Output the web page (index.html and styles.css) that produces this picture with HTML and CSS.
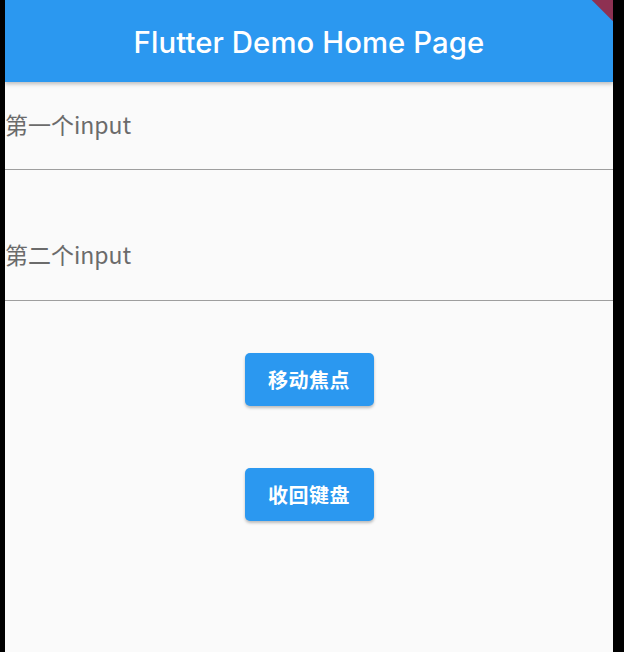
FILE: index.html
```html
<!DOCTYPE html>
<html lang="zh">
<head>
<meta charset="utf-8">
<title>Flutter Demo Home Page</title>
<link rel="stylesheet" href="styles.css">
</head>
<body>
<div class="screen">
  <header class="appbar">
    <h1 class="title">Flutter Demo Home Page</h1>
    <div class="debug-banner"></div>
  </header>
  <main class="content">
    <div class="field field-first"><span class="hint">第一个input</span></div>
    <div class="field field-second"><span class="hint">第二个input</span></div>
    <div class="buttons">
      <button class="btn">移动焦点</button>
      <button class="btn">收回键盘</button>
    </div>
  </main>
</div>
</body>
</html>
```
FILE: styles.css
```css
html, body {
  margin: 0;
  padding: 0;
  background: #000;
  height: 652px;
  overflow: hidden;
}
.screen {
  margin-left: 5px;
  width: 608px;
  height: 652px;
  background: #fafafa;
  display: flex;
  flex-direction: column;
  overflow: hidden;
}
.appbar {
  position: relative;
  height: 82px;
  flex: none;
  background: #2b98f0;
  box-shadow: 0 2px 4px rgba(0,0,0,0.25);
  display: flex;
  align-items: center;
  justify-content: center;
  overflow: hidden;
  z-index: 1;
}
.title {
  margin: 0;
  padding-top: 2px;
  color: #fff;
  font-family: "Inter", "Roboto", sans-serif;
  font-weight: 500;
  font-size: 29.3px;
  letter-spacing: 0.1px;
}
.debug-banner {
  position: absolute;
  top: -36px;
  right: -36px;
  width: 90px;
  height: 40px;
  background: #8e3152;
  transform: rotate(45deg);
}
.content {
  display: flex;
  flex-direction: column;
}
.field {
  border-bottom: 1px solid #9e9e9e;
  display: flex;
  align-items: flex-end;
  font-family: "Noto Sans CJK SC", "Noto Sans", sans-serif;
  font-size: 23px;
  color: #6b6b6b;
}
.field-first {
  height: 87px;
}
.field-second {
  height: 130px;
}
.hint {
  line-height: 30px;
  margin-left: 0;
  margin-bottom: 30px;
}
.field-second .hint {
  margin-bottom: 31px;
}
.buttons {
  display: flex;
  flex-direction: column;
  align-items: center;
  gap: 62px;
  padding-top: 52px;
}
.btn {
  width: 129px;
  height: 53px;
  border: none;
  border-radius: 5px;
  background: #2b98f0;
  color: #fff;
  font-family: "Noto Sans CJK SC", sans-serif;
  font-weight: 700;
  font-size: 20px;
  letter-spacing: 0.5px;
  box-shadow: 0 2px 3px rgba(0,0,0,0.25);
  padding: 0;
}
```
